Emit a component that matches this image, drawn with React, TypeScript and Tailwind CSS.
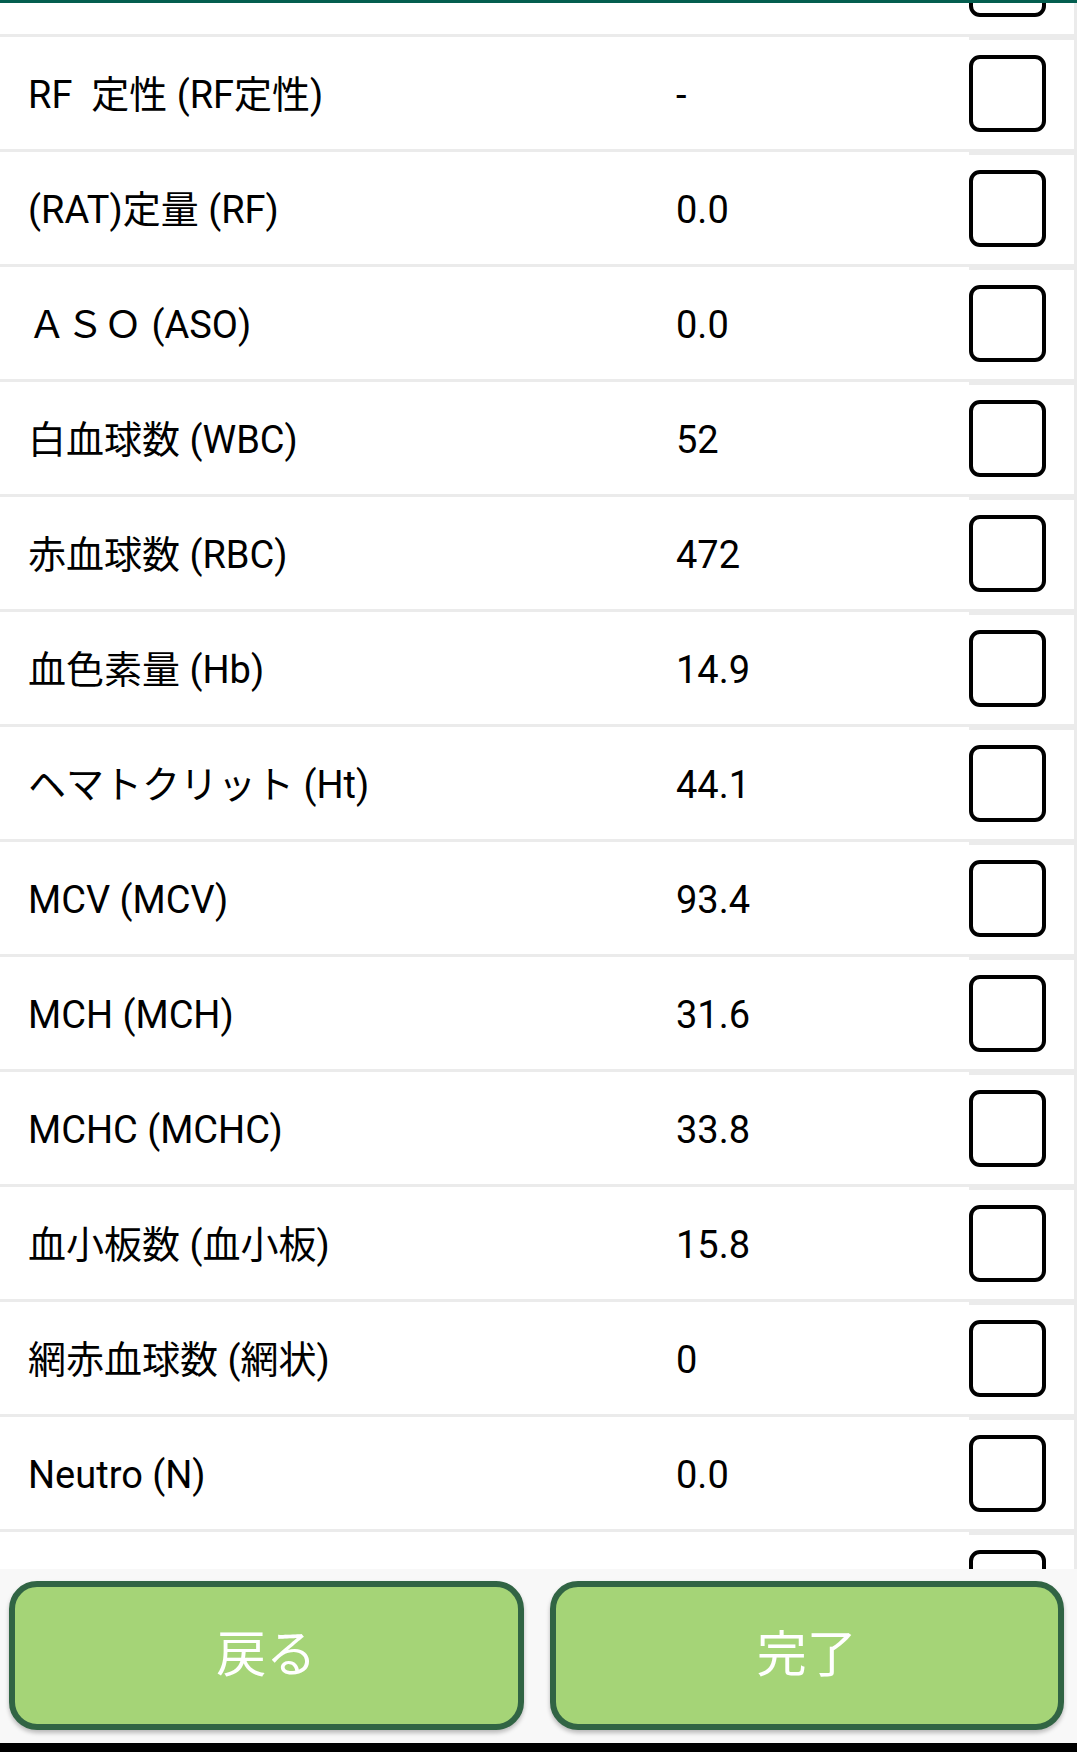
import React from 'react'

type Item = { label: string; value: string }

// list is scrolled: first and last rows are only partly visible (their text is out of view)
const ITEMS: Item[] = [
  { label: '', value: '' },
  { label: 'RF  定性 (RF定性)', value: '-' },
  { label: '(RAT)定量 (RF)', value: '0.0' },
  { label: 'ＡＳＯ (ASO)', value: '0.0' },
  { label: '白血球数 (WBC)', value: '52' },
  { label: '赤血球数 (RBC)', value: '472' },
  { label: '血色素量 (Hb)', value: '14.9' },
  { label: 'ヘマトクリット (Ht)', value: '44.1' },
  { label: 'MCV (MCV)', value: '93.4' },
  { label: 'MCH (MCH)', value: '31.6' },
  { label: 'MCHC (MCHC)', value: '33.8' },
  { label: '血小板数 (血小板)', value: '15.8' },
  { label: '網赤血球数 (網状)', value: '0' },
  { label: 'Neutro (N)', value: '0.0' },
  { label: '', value: '' }
]

const Row: React.FC<{ item: Item }> = ({ item }) => (
  <div className="flex h-[115px] shrink-0 pb-[3px] pr-[3px]">
    <div className="flex flex-1 items-center bg-white pt-[5px]">
      <span className="w-[676px] whitespace-pre pl-[28px]">{item.label}</span>
      <span>{item.value}</span>
    </div>
    <div className="mt-[3px] flex w-[105px] items-center bg-white">
      <div className="mt-[-2px] size-[77px] rounded-[11px] border-4 border-black bg-white" />
    </div>
  </div>
)

export default function App() {
  return (
    <div
      className="flex h-[1752px] w-[1077px] flex-col overflow-hidden bg-white text-[38px] text-black"
      style={{ fontFamily: 'Roboto, "Noto Sans CJK JP", sans-serif' }}
    >
      {/* Header edge */}
      <div className="h-[3px] shrink-0 bg-[#035e4f]" />

      {/* Results list */}
      <div className="h-[1566px] shrink-0 overflow-hidden bg-[#ebebeb]">
        <div className="mt-[-81px] flex flex-col">
          {ITEMS.map((item, i) => (
            <Row key={i} item={item} />
          ))}
        </div>
      </div>

      {/* Footer buttons */}
      <div className="flex h-[174px] shrink-0 gap-[26px] bg-[#f8f8f8] pb-[13px] pl-[9px] pr-[13px] pt-[12px]">
        <button className="flex flex-1 items-center justify-center rounded-[28px] border-[6px] border-[#316444] bg-[#a5d477] text-[50px] text-white shadow-[0_3px_4px_rgba(0,0,0,0.25)]">
          戻る
        </button>
        <button className="flex flex-1 items-center justify-center rounded-[28px] border-[6px] border-[#316444] bg-[#a5d477] text-[50px] text-white shadow-[0_3px_4px_rgba(0,0,0,0.25)]">
          完了
        </button>
      </div>

      <div className="h-[9px] shrink-0 bg-black" />
    </div>
  )
}
